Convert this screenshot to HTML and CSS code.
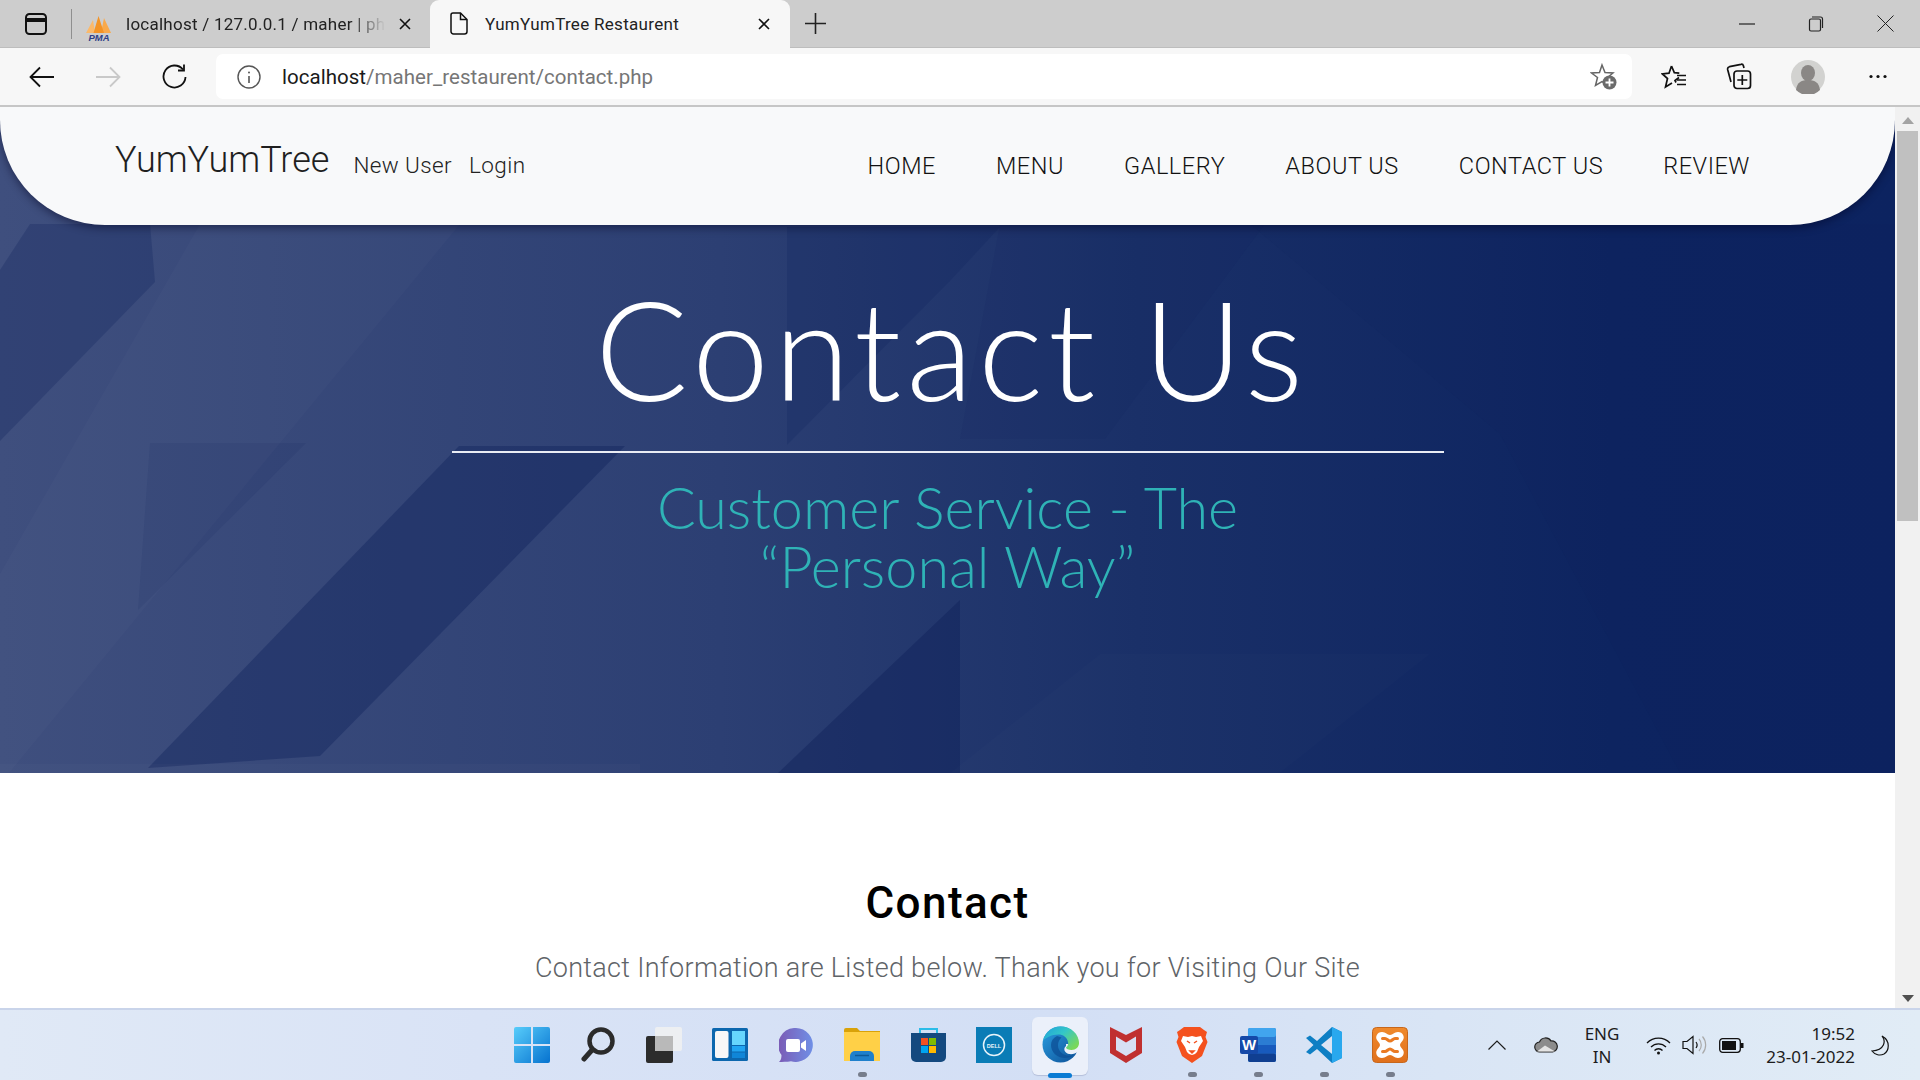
FILE: index.html
```html
<!DOCTYPE html>
<html lang="en">
<head>
<meta charset="utf-8">
<title>YumYumTree Restaurent</title>
<link rel="stylesheet" href="styles.css">
</head>
<body>
<div class="screen">
  <header class="tabbar">
    <svg class="ic sidebar-ic" width="22" height="22" viewBox="0 0 22 22" fill="none" stroke="#111" stroke-width="2"><rect x="1" y="1" width="20" height="20" rx="3.5"/><path d="M1 7h20" stroke-width="4"/></svg>
    <span class="tab-sep"></span>
    <div class="tab tab-inactive">
      <svg class="pma" width="26" height="25" viewBox="0 0 26 25"><path d="M7 4L0 17H9Z" fill="#fbb96a"/><path d="M18 2l7 15H15Z" fill="#f9a94a"/><path d="M12.500 0L18 17H7.500Z" fill="#f39325"/><text x="13" y="24.500" text-anchor="middle" class="pma-text">PMA</text></svg>
      <span class="tab-title tab-fade">localhost / 127.0.0.1 / maher | phpMyAdmin</span>
      <svg class="tab-x" width="12" height="12" viewBox="0 0 12 12" stroke="#111" stroke-width="1.6"><path d="M1 1l10 10M11 1L1 11"/></svg>
    </div>
    <div class="tab tab-active">
      <svg class="doc" width="18" height="23" viewBox="0 0 18 23" fill="none" stroke="#111" stroke-width="1.5"><path d="M3 1h7.500L17 7.500V19.500a2.500 2.500 0 0 1-2.500 2.500H3.500A2.500 2.500 0 0 1 1 19.500V3a2 2 0 0 1 2-2z"/><path d="M10.500 1v6.500H17"/></svg>
      <span class="tab-title">YumYumTree Restaurent</span>
      <svg class="tab-x" width="12" height="12" viewBox="0 0 12 12" stroke="#111" stroke-width="1.6"><path d="M1 1l10 10M11 1L1 11"/></svg>
    </div>
    <svg class="plus" width="21" height="21" viewBox="0 0 21 21" stroke="#222" stroke-width="1.6"><path d="M10.500 0v21M0 10.500h21"/></svg>
    <div class="window-ctrls">
      <svg width="16" height="16" viewBox="0 0 16 16" stroke="#222" stroke-width="1.2"><path d="M0 8h16"/></svg>
      <svg width="16" height="16" viewBox="0 0 16 16" fill="none" stroke="#222" stroke-width="1.2"><rect x="1.500" y="3" width="11" height="12" rx="1.500"/><path d="M4 1h8.500a2 2 0 0 1 2 2v9"/></svg>
      <svg width="17" height="17" viewBox="0 0 17 17" stroke="#222" stroke-width="1"><path d="M.5.5l16 16M16.500.5l-16 16"/></svg>
    </div>
  </header>

  <div class="toolbar">
    <svg class="nav-back" width="26" height="22" viewBox="0 0 26 22" fill="none" stroke="#111" stroke-width="1.8"><path d="M25 11H2M11 1.500L1.500 11l9.500 9.500"/></svg>
    <svg class="nav-fwd" width="26" height="22" viewBox="0 0 26 22" fill="none" stroke="#c9c9c9" stroke-width="1.8"><path d="M1 11h23M15 1.500l9.500 9.500-9.500 9.500"/></svg>
    <svg class="nav-reload" width="25" height="25" viewBox="0 0 25 25" fill="none" stroke="#111" stroke-width="1.8"><path d="M21 5.500A11 11 0 1 0 23.500 13"/><path d="M22 .5v6h-6"/></svg>
    <div class="address">
      <svg class="info" width="24" height="24" viewBox="0 0 24 24" fill="none" stroke="#555" stroke-width="1.4"><circle cx="12" cy="12" r="11"/><path d="M12 11v7" stroke-width="1.6"/><circle cx="12" cy="7.500" r="1" fill="#555" stroke="none"/></svg>
      <span class="url"><span class="url-host">localhost</span>/maher_restaurent/contact.php</span>
      <svg class="addfav" width="27" height="27" viewBox="0 0 27 27"><path d="M12 2l3 7.500 8 .5-6 5 2 7.500-7-4-6.500 4 2-8L1.500 10l8-.5z" fill="none" stroke="#666" stroke-width="1.500"/><circle cx="19.500" cy="19.500" r="7" fill="#6b6b6b"/><path d="M19.500 15.500v8M15.500 19.500h8" stroke="#fff" stroke-width="1.800"/></svg>
    </div>
    <div class="tools">
      <svg width="26" height="26" viewBox="0 0 26 26" fill="none" stroke="#111" stroke-width="1.700"><path d="M10.500 2l2.800 6.700 5 .4M18 13.500l-4 3 1 2M3 11l-1.500-1 6.500-.8L10.500 2M1.500 10l5 4.500L4.500 23l6.500-4"/><path d="M16 11.500h9M16 16h9M16 20.500h9" stroke-width="1.600"/></svg>
      <svg width="26" height="27" viewBox="0 0 26 27" fill="none" stroke="#111" stroke-width="1.700"><rect x="8" y="8" width="16.500" height="17.500" rx="3"/><path d="M16.300 12v10M11.300 17h10"/><path d="M18 5l-.6-2.300a2 2 0 0 0-2.400-1.400L3.500 3.700A2.500 2.500 0 0 0 1.700 6.700L5 19"/></svg>
      <svg class="avatar" width="34" height="34" viewBox="0 0 34 34"><circle cx="17" cy="17" r="17" fill="#d2d2d0"/><ellipse cx="17" cy="13" rx="7" ry="8" fill="#8a8785"/><path d="M5 30c1-8 6-10 12-10s11 2 12 10a17 17 0 0 1-24 0z" fill="#8a8785"/></svg>
      <svg width="20" height="5" viewBox="0 0 20 5" fill="#111"><circle cx="3" cy="2.500" r="1.600"/><circle cx="10" cy="2.500" r="1.600"/><circle cx="17" cy="2.500" r="1.600"/></svg>
    </div>
  </div>

  <div class="viewport">
    <main class="page">
      <nav class="site-nav">
        <a class="brand">YumYumTree</a>
        <a class="nav-small">New User</a>
        <a class="nav-small">Login</a>
        <ul class="nav-links">
          <li>HOME</li><li>MENU</li><li>GALLERY</li><li>ABOUT US</li><li>CONTACT US</li><li>REVIEW</li>
        </ul>
      </nav>
      <section class="hero">
        <svg class="hero-art" viewBox="0 0 1895 666" preserveAspectRatio="none" aria-hidden="true">
          <g transform="translate(0 117)">
            <g fill="#0c1f58" fill-opacity=".26">
              <path d="M30 0H150L155 58 0 217V46Z"/>
              <path d="M153 219H306L138 386 150 219Z" fill-opacity=".1"/>
              <path d="M459 222H625L320 532 148 544Z" fill-opacity=".36"/>
              <path d="M787 3H1000L949 58 787 221Z" fill-opacity=".2"/>
              <path d="M960 376V549H778Z" fill-opacity=".4"/>
              <path d="M1250 0H1895V549H1680L1500 210Z" fill-opacity=".06"/>
              <path d="M1000 0H1265L1105 215H960Z" fill-opacity=".08"/>
            </g>
            <g fill="#fff" fill-opacity=".02">
              <path d="M200 0H460L0 560V350Z"/>
              <path d="M1100 430H1430L1280 549H950Z" fill-opacity=".012"/>
              <path d="M0 540H640V549H0Z"/>
            </g>
          </g>
        </svg>
        <div class="hero-inner">
          <h1 class="hero-title">Contact Us</h1>
          <hr class="hero-rule">
          <p class="hero-sub">Customer Service - The<br>“Personal Way”</p>
        </div>
      </section>
      <section class="contact">
        <h2 class="contact-title">Contact</h2>
        <p class="contact-sub">Contact Information are Listed below. Thank you for Visiting Our Site</p>
      </section>
    </main>
    <aside class="scrollbar">
      <span class="arrow-up"></span>
      <span class="thumb"></span>
      <span class="arrow-down"></span>
    </aside>
  </div>

  <footer class="taskbar">
    <div class="task-icons">
      <div class="task"><svg width="36" height="36" viewBox="0 0 36 36"><defs><linearGradient id="w" x1="0" y1="0" x2="1" y2="1"><stop offset="0" stop-color="#58cdfb"/><stop offset="1" stop-color="#0672cf"/></linearGradient></defs><path d="M2 0h15v17H0V2a2 2 0 0 1 2-2zM19 0h15a2 2 0 0 1 2 2v15H19zM0 19h17v17H2a2 2 0 0 1-2-2zM19 19h17v15a2 2 0 0 1-2 2H19z" fill="url(#w)"/></svg></div>
      <div class="task"><svg width="34" height="36" viewBox="0 0 34 36" fill="none" stroke="#2b2b2b"><circle cx="20" cy="14" r="11.500" stroke-width="4.500"/><path d="M11 23L3 32" stroke-width="5" stroke-linecap="round"/></svg></div>
      <div class="task"><svg width="36" height="36" viewBox="0 0 36 36"><rect x="0" y="9" width="27" height="27" rx="2" fill="#2c2c2c"/><rect x="9" y="0" width="27" height="24" rx="2" fill="#f1f1f1" fill-opacity=".85"/><rect x="9" y="9" width="18" height="15" fill="#b9b9b9"/></svg></div>
      <div class="task"><svg width="36" height="33" viewBox="0 0 36 33"><rect width="36" height="33" rx="1.500" fill="#0c67ae"/><rect x="3" y="3" width="13.500" height="27" rx="2" fill="#f7f7f7"/><rect x="20" y="3" width="13" height="14" fill="#66d6fd"/><rect x="20" y="18" width="13" height="5.500" fill="#20a5f2"/><rect x="20" y="24.500" width="13" height="5.500" fill="#0f86d8"/></svg></div>
      <div class="task"><svg width="34" height="34" viewBox="0 0 34 34"><defs><linearGradient id="c" x1="0" y1="0" x2="1" y2="0"><stop offset="0" stop-color="#7b5bb5"/><stop offset="1" stop-color="#6f8fe6"/></linearGradient></defs><path d="M17 0a17 17 0 1 1-5 33.300C8 34 3 34 0 34c2-2 2.500-4 2.500-7A17 17 0 0 1 17 0z" fill="url(#c)"/><rect x="7" y="11" width="14" height="13" rx="2" fill="#fff"/><path d="M22 15.500l5-3.500v11l-5-3.500z" fill="#fff"/></svg></div>
      <div class="task"><svg width="36" height="33" viewBox="0 0 36 33"><path d="M0 2a2 2 0 0 1 2-2h11l3 3h20v4H0z" fill="#d9a209"/><path d="M0 4h36v29H0z" fill="#ffd047"/><path d="M6 33v-5a5 5 0 0 1 5-5h14a5 5 0 0 1 5 5v5z" fill="#1f80cc"/><path d="M11 27.500h14" stroke="#0d5a99" stroke-width="1.500"/></svg><span class="pill"></span></div>
      <div class="task"><svg width="35" height="35" viewBox="0 0 35 35"><path d="M9 6V2h17v4" fill="none" stroke="#2cbce8" stroke-width="2"/><path d="M0 6h35v24a5 5 0 0 1-5 5H5a5 5 0 0 1-5-5z" fill="#14497f"/><rect x="10" y="11" width="7" height="7" fill="#f25022"/><rect x="18" y="11" width="7" height="7" fill="#7fba00"/><rect x="10" y="19" width="7" height="7" fill="#00a4ef"/><rect x="18" y="19" width="7" height="7" fill="#ffb900"/></svg></div>
      <div class="task"><svg width="36" height="36" viewBox="0 0 36 36"><rect width="36" height="36" fill="#0a7cb6"/><circle cx="18" cy="18" r="10.500" fill="none" stroke="#e8f4fa" stroke-width="1.500"/><text x="18" y="20.500" text-anchor="middle" class="dell-text">DELL</text></svg></div>
      <div class="task task-current"><svg width="37" height="37" viewBox="0 0 37 37"><defs><linearGradient id="e1" x1="0" y1="0" x2="1" y2=".7"><stop offset="0" stop-color="#1f9fdc"/><stop offset=".5" stop-color="#33c6c8"/><stop offset="1" stop-color="#7ad85a"/></linearGradient><linearGradient id="e2" x1="0" y1="0" x2="1" y2="1"><stop offset="0" stop-color="#2a9fe2"/><stop offset="1" stop-color="#0d4f96"/></linearGradient></defs><circle cx="18.500" cy="18.500" r="18" fill="url(#e2)"/><path d="M24 20c-3 2-2 7 3 8 3 .5 6 0 10-3V18H24z" fill="#ebf0fa"/><path d="M15 10c-4 2-6 5-6 9 0 7 6 13 14 13 3 0 6-1 9-3-2 .5-5 1-7 .5-5-1-9-5-9-10 0-3 1-6 3.500-8z" fill="#0c4f96" fill-opacity=".75"/><path d="M1 15C3 6 10 .5 18.500.5 29 .5 37 8 37 17c0 4-3 7-7.500 7-3 0-5.500-1-5.500-2.500 2-1.500 2.500-3.500 2-5.500C25 11 21 8.500 16.500 8.500 9 8.500 3 12 1 15z" fill="url(#e1)"/></svg><span class="pill pill-active"></span></div>
      <div class="task"><svg width="32" height="36" viewBox="0 0 32 36"><path d="M0 0l16 8 16-8v26l-16 10L0 26z" fill="#c03030"/><path d="M6 9.500l10 6 10-6V23l-10 6L6 23z" fill="#d7e0f4"/></svg></div>
      <div class="task"><svg width="32" height="36" viewBox="0 0 32 36"><path d="M8 0h16l4 3 3 2-1.500 5 2 5L26 29l-10 7-10-7L.5 15l2-5L1 5l3-2z" fill="#f4511e"/><path d="M7 9l5 1 4-1 4 1 5-1 2 5-4 6-2 5-2 2-3 1-3-1-2-2-2-5-4-6z" fill="#fff"/><path d="M11 14l3 2M21 14l-3 2M14 24h4l-2 2z" stroke="#f4511e" stroke-width="1.500" fill="#f4511e"/></svg><span class="pill"></span></div>
      <div class="task"><svg width="36" height="34" viewBox="0 0 36 34"><rect x="8" y="0" width="28" height="34" rx="2" fill="#2b7cd3"/><rect x="8" y="0" width="28" height="9" rx="2" fill="#41a5ee"/><rect x="8" y="17" width="28" height="8.500" fill="#185abd"/><rect x="8" y="25.500" width="28" height="8.500" rx="2" fill="#103f91"/><rect x="0" y="8" width="18" height="18" rx="2" fill="#1549a8"/><text x="9" y="22" text-anchor="middle" class="word-text">W</text></svg><span class="pill"></span></div>
      <div class="task"><svg width="36" height="36" viewBox="0 0 36 36"><path d="M26 0l10 5v26l-10 5L11 22l-7 5.500L0 25l7.500-7L0 11l4-2.500L11 14z" fill="#0e7fc4"/><path d="M26 0l10 5v26l-10 5V0z" fill="#29a8ee"/><path d="M26 9L15 18l11 9z" fill="#dbe4f4"/></svg><span class="pill"></span></div>
      <div class="task"><svg width="36" height="36" viewBox="0 0 36 36"><defs><linearGradient id="x" x1="0" y1="0" x2="0" y2="1"><stop offset="0" stop-color="#f08a2c"/><stop offset="1" stop-color="#e0701c"/></linearGradient></defs><rect x=".5" y=".5" width="35" height="35" rx="4" fill="url(#x)" stroke="#c7671c"/><path d="M10 5c4 0 5 3 8 3s4-3 8-3c5 0 7 5 5 8-1 2-3 3-3 5s2 3 3 5c2 3 0 8-5 8-4 0-5-3-8-3s-4 3-8 3c-5 0-7-5-5-8 1-2 3-3 3-5s-2-3-3-5C3 10 5 5 10 5z" fill="#fff"/><path d="M10.500 11.500h2.500c2 0 3 2.500 5 2.500s3-2.500 5-2.500h2.500M10.500 24.500h2.500c2 0 3-2.500 5-2.500s3 2.500 5 2.500h2.500" fill="none" stroke="#ea7a22" stroke-width="3" stroke-linecap="round"/></svg><span class="pill"></span></div>
    </div>
    <div class="tray">
      <svg class="tray-chev" width="18" height="10" viewBox="0 0 18 10" fill="none" stroke="#1c1c1c" stroke-width="1.200"><path d="M.5 9.500L9 1l8.500 8.500"/></svg>
      <svg class="tray-cloud" width="24" height="16" viewBox="0 0 24 16"><path d="M6 15a5 5 0 0 1-.5-10A6.500 6.500 0 0 1 17 4a5.500 5.500 0 0 1 1.500 11z" fill="#8c8c8c" stroke="#222" stroke-width="1.200"/><path d="M3 14.500l8-6 10 6z" fill="#e4e4e4"/></svg>
      <div class="tray-lang"><span>ENG</span><span>IN</span></div>
      <svg class="tray-wifi" width="25" height="19" viewBox="0 0 25 19" fill="none" stroke="#111" stroke-width="1.300"><path d="M1 7a16 16 0 0 1 23 0M5 11a10.500 10.500 0 0 1 15 0M8.500 14.500a5.500 5.500 0 0 1 8 0"/><circle cx="12.500" cy="17" r="1.500" fill="#111" stroke="none"/></svg>
      <svg class="tray-vol" width="25" height="20" viewBox="0 0 25 20" fill="none" stroke="#111" stroke-width="1.200"><path d="M1 6.500h4L11 1.500v17l-6-5H1z"/><path d="M14 7a5 5 0 0 1 0 6"/><path d="M17 4a9 9 0 0 1 0 12M20.500 1.500a13 13 0 0 1 0 17" stroke="#aaa"/></svg>
      <svg class="tray-bat" width="25" height="15" viewBox="0 0 25 15" fill="none" stroke="#111" stroke-width="1.300"><rect x=".7" y=".7" width="20.600" height="13.600" rx="3"/><rect x="3" y="3" width="14" height="9" fill="#111" stroke="none"/><path d="M23 5v5" stroke-width="3"/></svg>
      <div class="tray-clock"><span>19:52</span><span>23-01-2022</span></div>
      <svg class="tray-moon" width="19" height="21" viewBox="0 0 19 21" fill="none" stroke="#111" stroke-width="1.200"><path d="M11 1c4 5 3 14-10 15 3 4 8 5 12 3 5-3 7-13-2-18z"/></svg>
    </div>
  </footer>
</div>
</body>
</html>
```
FILE: styles.css
```css
* { box-sizing: border-box; }
html, body { margin: 0; height: 100%; overflow: hidden; }
body { font-family: "Roboto", "Liberation Sans", sans-serif; color: #212529; }
.screen { width: 1920px; height: 1080px; display: flex; flex-direction: column; }

/* tab strip */
.tabbar { height: 48px; flex: none; background: #cdcdcd; display: flex; align-items: center; border-bottom: 1px solid #bdbdbd; }
.sidebar-ic { margin-left: 25px; flex: none; }
.tab-sep { width: 1px; height: 30px; background: #8f8f8f; margin-left: 24px; flex: none; }
.tab { display: flex; align-items: center; height: 48px; flex: none; }
.tab-inactive { width: 358px; padding-left: 14px; }
.tab-active { width: 360px; padding-left: 20px; background: #f7f7f7; border-radius: 9px 9px 0 0; }
.tab-title { font-size: 17px; color: #222; white-space: nowrap; overflow: hidden; }
.tab-inactive .tab-title { width: 262px; margin-left: 14px; letter-spacing: .25px; }
.tab-fade { -webkit-mask-image: linear-gradient(90deg, #000 86%, transparent 99%); mask-image: linear-gradient(90deg, #000 86%, transparent 99%); }
.tab-active .tab-title { width: 273px; margin-left: 17px; letter-spacing: .3px; }
.tab-inactive .tab-x { margin-left: 11px; }
.pma { flex: none; margin-top: 10px; }
.doc { flex: none; }
.pma-text { font: italic bold 9.500px "Liberation Sans", sans-serif; fill: #2f3f86; }
.plus { margin-left: 15px; flex: none; }
.window-ctrls { margin-left: auto; margin-right: 26px; display: flex; align-items: center; gap: 53px; }

/* address toolbar */
.toolbar { height: 59px; flex: none; background: #f7f7f7; border-bottom: 2px solid #c6c6c6; display: flex; align-items: center; }
.nav-back { margin-left: 29px; flex: none; }
.nav-fwd { margin-left: 40px; flex: none; }
.nav-reload { margin-left: 41px; flex: none; }
.address { width: 1416px; height: 45px; margin-left: 29px; background: #fff; border-radius: 7px; display: flex; align-items: center; padding: 0 15px 0 21px; flex: none; }
.url { font-size: 20.500px; color: #767676; margin-left: 21px; letter-spacing: .03px; }
.url-host { color: #1a1a1a; }
.addfav { margin-left: auto; }
.tools { flex: 1; display: flex; align-items: center; justify-content: space-between; padding: 0 32px 0 29px; }
.avatar { margin-right: 4px; }

/* page */
.viewport { flex: 1; display: flex; min-height: 0; }
.page { flex: 1; min-width: 0; overflow: hidden; position: relative; background: #fff; }
.site-nav { height: 118px; margin-bottom: -118px; background: #f8f9fa; border-radius: 0 0 105px 105px / 0 0 105px 105px; display: flex; align-items: center; padding: 0 145px 0 115px; position: relative; z-index: 2; box-shadow: 0 3px 8px rgba(0, 0, 30, .45); }
.brand { font-size: 36px; font-weight: 300; color: #1f1f1f; margin-top: -13px; margin-right: 24px; }
.nav-small { font-size: 22.500px; font-weight: 300; color: #222; margin-right: 17px; letter-spacing: .4px; margin-top: -2px; }
.nav-links { list-style: none; display: flex; gap: 60px; margin: 0 0 0 auto; padding: 0; font-size: 23.500px; font-weight: 300; color: #111; letter-spacing: .55px; }

.hero { height: 666px; position: relative; background: linear-gradient(90deg, #3f4f7e 0%, #2c3f73 38%, #1a3068 60%, #0d2460 85%, #0c2360 100%); display: flex; justify-content: center; }
.hero-art { position: absolute; left: 0; top: 0; width: 100%; height: 100%; }
.hero-inner { position: relative; display: flex; flex-direction: column; align-items: center; width: 992px; padding-top: 166px; }
.hero-title { margin: 0; padding-left: 8px; font-family: "Lato", sans-serif; font-weight: 300; font-size: 138px; line-height: 150px; color: #fff; letter-spacing: 5px; white-space: nowrap; }
.hero-rule { width: 992px; height: 2px; border: 0; margin: 28px 0 0; background: #e9ecf4; }
.hero-sub { margin: 25px 0 0; font-family: "Lato", sans-serif; font-weight: 300; font-size: 57.500px; line-height: 58.500px; color: #2fb3b6; text-align: center; }

.contact { text-align: center; padding-top: 105px; }
.contact-title { margin: 0; font-size: 44px; line-height: 50px; font-weight: 500; color: #000; letter-spacing: 1.400px; }
.contact-sub { margin: 22px 0 0; font-size: 27px; line-height: 36px; font-weight: 300; color: #5f6468; letter-spacing: .3px; }

/* scrollbar */
.scrollbar { width: 25px; flex: none; background: #f1f1f1; display: flex; flex-direction: column; align-items: center; position: relative; }
.arrow-up { margin-top: 10px; width: 0; height: 0; border-left: 6px solid transparent; border-right: 6px solid transparent; border-bottom: 7px solid #a3a3a3; }
.thumb { width: 21px; height: 390px; margin-top: 7px; background: #c0c0c0; }
.arrow-down { margin-top: auto; margin-bottom: 6px; width: 0; height: 0; border-left: 6px solid transparent; border-right: 6px solid transparent; border-top: 7px solid #505050; }

/* taskbar */
.taskbar { height: 72px; flex: none; display: flex; align-items: stretch; background: linear-gradient(90deg, #e0e9f6 0%, #d9e3f6 25%, #d3dff5 55%, #d9e5f5 75%, #e1ecf6 100%); border-top: 2px solid #c9d4ea; position: relative; }
.task-icons { display: flex; padding-left: 499px; }
.task { width: 66px; display: flex; align-items: center; justify-content: center; position: relative; padding-bottom: 1px; }
.task-current::before { content: ""; position: absolute; left: 5px; right: 5px; top: 7px; bottom: 5px; background: #ebf0fa; border-radius: 6px; box-shadow: 0 1px 1px rgba(0, 0, 60, .15); }
.task svg { position: relative; }
.pill { position: absolute; left: 50%; bottom: 3px; width: 9px; height: 5px; margin-left: -4.500px; background: #767d8c; border-radius: 3px; }
.pill-active { width: 24px; margin-left: -12px; background: #0a7bd4; bottom: 2px; }
.dell-text { font: bold 5.500px "Liberation Sans", sans-serif; fill: #e8f4fa; }
.word-text { font: bold 15px "Liberation Sans", sans-serif; fill: #fff; }
.tray { margin-left: auto; display: flex; align-items: center; font-family: "Noto Sans", sans-serif; font-size: 17px; color: #1c1c1c; width: 441px; }
.tray svg { flex: none; }
.tray-chev { margin-left: 9px; }
.tray-cloud { margin-left: 28px; }
.tray-lang { width: 70px; margin-left: 9px; display: flex; flex-direction: column; align-items: center; line-height: 23px; }
.tray-wifi { margin-left: 9px; }
.tray-vol { margin-left: 11px; }
.tray-bat { margin-left: 12px; }
.tray-clock { width: 106px; margin-left: 5px; display: flex; flex-direction: column; align-items: flex-end; line-height: 23px; }
.tray-moon { margin-left: 16px; }
```
